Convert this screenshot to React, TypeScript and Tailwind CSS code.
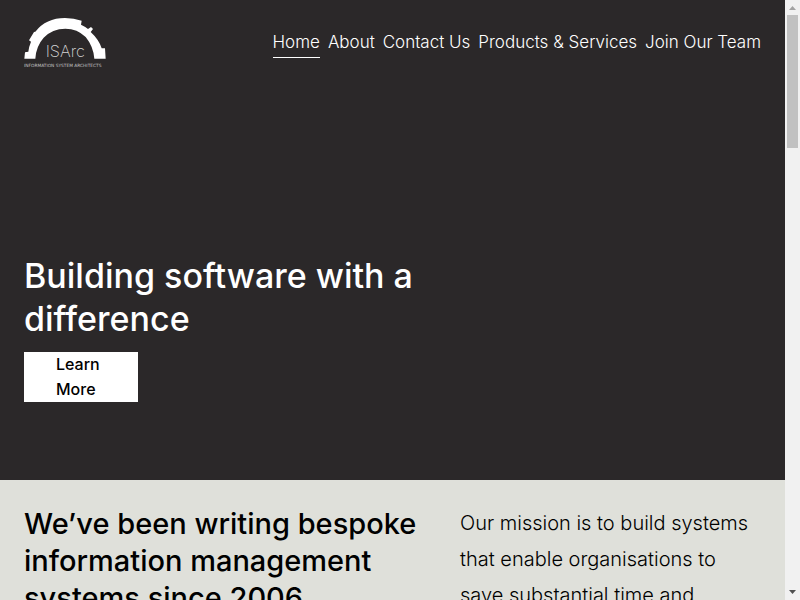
import { useState } from "react";

const links = [
  { label: "Home", href: "#home" },
  { label: "About", href: "#about" },
  { label: "Contact Us", href: "#contact" },
  { label: "Products & Services", href: "#products" },
  { label: "Join Our Team", href: "#join" },
];

const Logo = () => (
  <svg viewBox="0 0 246 150" className="w-[82px] h-[50px]" role="img" aria-label="ISArc">
    <path
      fill="#fff"
      d="M1 122L3 103L13 101Q15 85 21 71L15 67L30 42L34 41Q66 0 123 0Q150 0 173 8L171 20Q184 26 192 33L201 27L207 33L200 42Q225 65 233 91L243 91L245 122H211Q208 85 185 57Q160 32 124 32Q85 32 59 59Q36 85 34 122Z"
    />
    <text x="65" y="116" fill="#d4d4d4" fontSize="49" fontWeight="200" fontFamily="Inter, sans-serif">
      ISArc
    </text>
    <text x="0" y="148" fill="#c4c4c4" fontSize="13" fontFamily="DejaVu Sans, sans-serif">
      INFORMATION SYSTEM ARCHITECTS
    </text>
  </svg>
);

const ScrollRail = () => (
  <div className="flex w-[15px] shrink-0 flex-col items-center justify-between bg-[#f1f1f1]" aria-hidden="true">
    <div className="flex w-full flex-col items-center">
      <svg viewBox="0 0 15 15" className="size-[15px]">
        <path d="M4 10L7.5 6L11 10Z" fill="#a3a3a3" />
      </svg>
      <div className="h-[133px] w-[11px] bg-[#c1c1c1]" />
    </div>
    <svg viewBox="0 0 15 15" className="size-[15px]">
      <path d="M4 5L7.5 9L11 5Z" fill="#505050" />
    </svg>
  </div>
);

const App = () => {
  const [current, setCurrent] = useState("Home");

  return (
    <div className="flex h-screen overflow-hidden font-['Inter',sans-serif]">
      <div className="min-w-0 flex-1 overflow-hidden">
        <section className="flex h-[80vh] flex-col bg-[#2b2829] text-white">
          <header className="flex items-start justify-between px-6 pt-[18px]">
            <a href="#home">
              <Logo />
            </a>
            <nav className="flex gap-2 pt-3">
              {links.map((link) => (
                <a
                  key={link.label}
                  href={link.href}
                  onClick={() => setCurrent(link.label)}
                  className={
                    current === link.label
                      ? "border-b border-white pb-0.5 text-[17px]/[25px] font-light whitespace-nowrap"
                      : "border-b border-transparent pb-0.5 text-[17px]/[25px] font-light whitespace-nowrap"
                  }
                >
                  {link.label}
                </a>
              ))}
            </nav>
          </header>
          <div className="mt-auto px-6 pb-[78px]">
            <h1 className="max-w-[420px] text-[34px]/[43px] font-medium">
              Building software with a difference
            </h1>
            <button className="mt-3 block w-[114px] bg-white px-8 text-left text-base/[25px] font-medium text-black">
              Learn More
            </button>
          </div>
        </section>

        <section className="grid grid-cols-[412fr_301fr] gap-6 bg-[#dfe0da] px-6 py-[25px] text-black">
          <h2 className="text-[29px]/[37px] font-medium">
            We’ve been writing bespoke information management systems since 2006
          </h2>
          <p className="text-xl/[36px] font-light">
            Our mission is to build systems that enable organisations to save substantial time and
          </p>
        </section>
      </div>
      <ScrollRail />
    </div>
  );
};

export default App;
